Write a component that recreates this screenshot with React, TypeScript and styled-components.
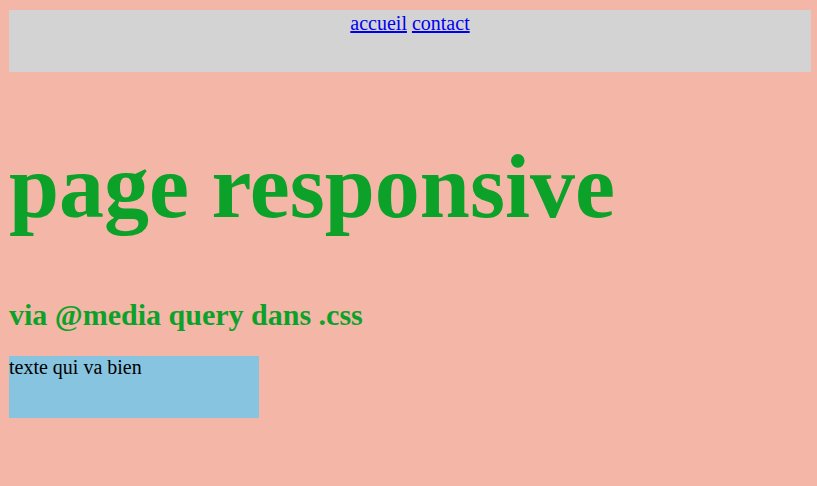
import styled, { createGlobalStyle } from 'styled-components';

const GlobalStyle = createGlobalStyle`
  html, body {
    margin: 0;
    background-color: #f4b6a7;
  }
  body {
    padding: 10px 6px 0 9px;
    font-family: "Liberation Serif", "Times New Roman", serif;
  }
`;

const Nav = styled.nav`
  width: 802px;
  height: 62px;
  background-color: #d3d3d3;
  text-align: center;
  font-size: 20px;
  line-height: 26px;
`;

const NavLink = styled.a`
  color: #0000ee;
  text-decoration: underline;
`;

const Title = styled.h1`
  margin: 63px 0 60px;
  font-size: 90px;
  font-weight: bold;
  line-height: normal;
  color: #0ca22a;
`;

const Subtitle = styled.h2`
  margin: 0 0 24px;
  font-size: 30px;
  font-weight: bold;
  line-height: normal;
  color: #0ca22a;
`;

const Box = styled.div`
  width: 250px;
  height: 62px;
  background-color: #87c4df;
  font-size: 20px;
  line-height: normal;
  color: #000;
`;

export default function App() {
  return (
    <>
      <GlobalStyle />
      <Nav>
        <NavLink href='#'>accueil</NavLink>
        {' '}
        <NavLink href='#'>contact</NavLink>
      </Nav>
      <Title>page responsive</Title>
      <Subtitle>via @media query dans .css</Subtitle>
      <Box>texte qui va bien</Box>
    </>
  );
}
